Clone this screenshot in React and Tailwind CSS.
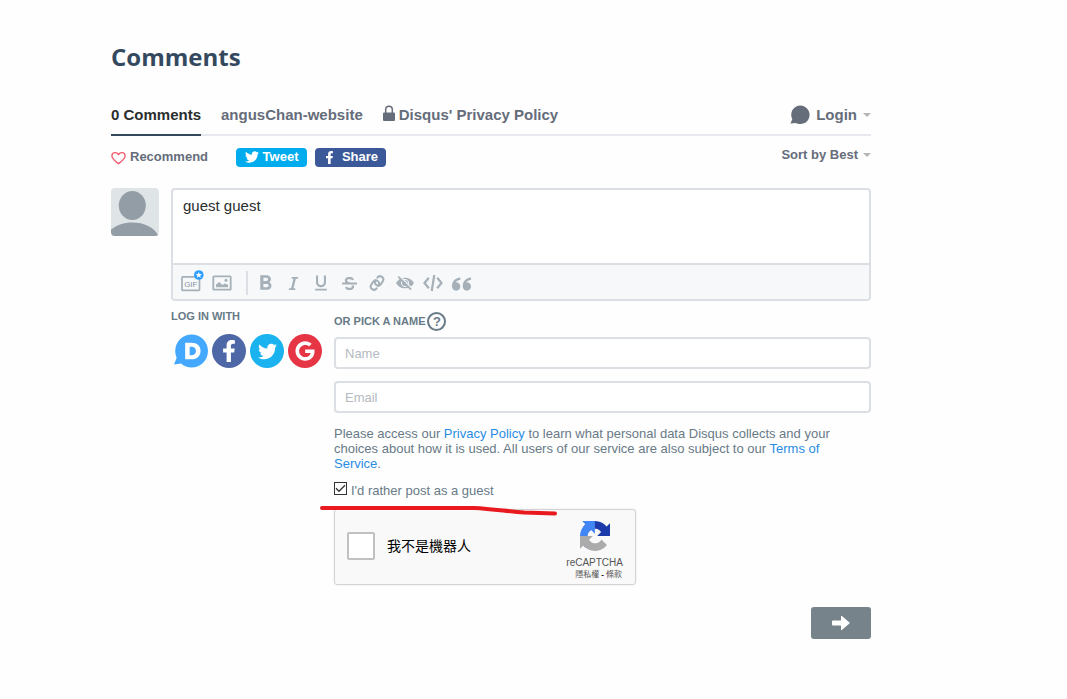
import React from "react";
import { FaTwitter, FaFacebookF, FaGoogle, FaItalic, FaStrikethrough } from "react-icons/fa";
import { SiDisqus } from "react-icons/si";
import { ImQuotesLeft } from "react-icons/im";
import { MdFormatBold, MdFormatUnderlined } from "react-icons/md";

function Caret() {
  return (
    <svg className="h-1 w-2" viewBox="0 0 8 4" fill="#b3b6b9" aria-hidden="true">
      <path d="M0 0h8L4 4z" />
    </svg>
  );
}

function Lock() {
  return (
    <svg className="mb-1 h-4 w-3" viewBox="0 0 12 16" aria-hidden="true">
      <rect y="7.500" width="12" height="8.500" rx="1" fill="#656c7a" />
      <path d="M2.700 8V4.500a3.300 3.300 0 0 1 6.600 0V8" fill="none" stroke="#656c7a" strokeWidth="1.500" />
    </svg>
  );
}

function Bubble() {
  return (
    <svg className="h-5 w-5" viewBox="0 0 20 20" fill="#656c7a" aria-hidden="true">
      <path d="M10.300.5a9.300 9.300 0 1 1-4.600 17.400L.4 18.600l1.900-4.400A9.300 9.300 0 0 1 10.300.5z" />
    </svg>
  );
}

function Heart() {
  return (
    <svg className="h-[15px] w-[15px]" viewBox="0 0 16 16" fill="none" stroke="#f05f70" strokeWidth="1.500" aria-hidden="true">
      <path d="M8 14.500C5 12.200 1 9.700 1 6.100 1 2.600 5.800 1.400 8 4.800 10.200 1.400 15 2.600 15 6.100 15 9.700 11 12.200 8 14.500z" />
    </svg>
  );
}

function Avatar() {
  return (
    <svg className="size-12 shrink-0 rounded-sm" viewBox="0 0 48 48" role="img" aria-label="Avatar">
      <rect width="48" height="48" fill="#dfe4e7" />
      <ellipse cx="21.300" cy="17.500" rx="13.500" ry="14.500" fill="#929da5" />
      <path d="M0 48v-6.500C6 37 13 34.500 21 34.500c12 0 22 4.500 26.500 13.500z" fill="#929da5" />
    </svg>
  );
}

function GifIcon() {
  return (
    <svg className="h-6 w-6" viewBox="0 0 24 24" aria-hidden="true">
      <rect x="2" y="6.800" width="17.500" height="13.500" rx="0.800" fill="none" stroke="#a5b0b8" strokeWidth="1.700" />
      <text x="10.800" y="16.700" textAnchor="middle" fontSize="8" fontFamily="Liberation Sans, sans-serif" fill="#87949e">GIF</text>
      <circle cx="18.800" cy="5" r="4.800" fill="#2e9fff" />
      <path d="M18.800 1.900l.9 2 2.200.2-1.700 1.500.5 2.100-1.900-1.100-1.900 1.100.5-2.100-1.700-1.500 2.200-.2z" fill="#fff" />
    </svg>
  );
}

function ImageIcon() {
  return (
    <svg className="h-4 w-5" viewBox="0 0 20 16" aria-hidden="true">
      <rect x="1.300" y="1.300" width="17.400" height="13.400" rx="0.800" fill="none" stroke="#a5b0b8" strokeWidth="1.800" />
      <path d="M4 12.300V9.800L7.200 7l3.300 3 2.300-1.600L16 9.800v2.500z" fill="#a5b0b8" />
      <circle cx="14" cy="5.300" r="1.500" fill="#a5b0b8" />
    </svg>
  );
}

function LinkIcon() {
  return (
    <svg className="size-4" viewBox="0 0 16 16" fill="none" stroke="#a5b0b8" strokeWidth="2" strokeLinecap="round" aria-hidden="true">
      <path d="M6.800 5.200C5.500 7 5.800 9 7.300 10c1.500 1 3.400.7 4.500-.8l1.900-2.800c1-1.600.7-3.500-.8-4.600-1.500-1-3.400-.7-4.500.8" />
      <path d="M9.200 10.800C10.500 9 10.200 7 8.700 6c-1.500-1-3.400-.7-4.500.8L2.300 9.600c-1 1.600-.7 3.500.8 4.600 1.500 1 3.400.7 4.500-.8" />
    </svg>
  );
}

function SpoilerIcon() {
  return (
    <svg className="h-4 w-[18px]" viewBox="0 0 18 16" aria-hidden="true">
      <path d="M0 8c2-3.300 5-5.300 9-5.300S16 4.700 18 8c-2 3.300-5 5.300-9 5.300S2 11.300 0 8z" fill="#a5b0b8" />
      <circle cx="9" cy="8" r="3.600" fill="none" stroke="#f6f8f9" strokeWidth="1" />
      <path d="M3.600.7l12.600 13" stroke="#f6f8f9" strokeWidth="1.300" />
      <path d="M2.300 1.600l12.800 13" stroke="#a5b0b8" strokeWidth="1.700" />
    </svg>
  );
}

function CodeIcon() {
  return (
    <svg className="h-[18px] w-5" viewBox="0 0 20 18" fill="none" stroke="#a5b0b8" strokeWidth="2.200" aria-hidden="true">
      <path d="M5.800 3.800L1.500 9l4.300 5.200M14.200 3.800L18.500 9l-4.300 5.200M11.300 1L8.700 17" />
    </svg>
  );
}

function RecaptchaLogo() {
  return (
    <svg className="size-[30px]" viewBox="0 0 64 64" aria-hidden="true">
      <path fill="#1c3aa9" d="M64 31.955l-.033-1.370V4.687l-7.160 7.160C50.948 4.674 42.033.093 32.050.093c-10.400 0-19.622 4.960-25.458 12.640l11.736 11.860a15.550 15.550 0 0 1 4.754-5.334c2.050-1.600 4.952-2.906 8.968-2.906.485 0 .860.057 1.135.163 4.976.393 9.288 3.140 11.828 7.124l-8.307 8.307L64 31.953" />
      <path fill="#4285f4" d="M31.862.094l-1.370.033H4.594l7.160 7.160C4.580 13.147 0 22.060 0 32.046c0 10.400 4.960 19.622 12.640 25.458L24.500 45.768a15.550 15.550 0 0 1-5.334-4.754c-1.600-2.050-2.906-4.952-2.906-8.968 0-.485.057-.860.163-1.135.393-4.976 3.140-9.288 7.124-11.828l8.307 8.307L31.860.095" />
      <path fill="#ababab" d="M.001 32.045l.033 1.370v25.898l7.160-7.160c5.860 7.173 14.774 11.754 24.760 11.754 10.400 0 19.622-4.960 25.458-12.640l-11.736-11.860a15.550 15.550 0 0 1-4.754 5.334c-2.050 1.600-4.952 2.906-8.968 2.906-.485 0-.860-.057-1.135-.163-4.976-.393-9.288-3.140-11.828-7.124l8.307-8.307c-10.522.040-22.400.066-27.295-.005" />
    </svg>
  );
}

const field =
  "h-8 w-full rounded border-2 border-[#dbdfe4] bg-white px-[9px] text-[13px] text-[#2a2e2e] placeholder:text-[#b3bac1] outline-none";
const tool = "flex w-7 justify-center";
const social = "flex size-[34px] items-center justify-center rounded-full";

export default function App() {
  return (
    <main className="min-h-screen bg-[#fefefe] pt-10 pr-4 pb-[60px] pl-[111px] font-['Liberation_Sans',Arial,sans-serif] text-[13px] text-[#656c7a]">
      <div className="max-w-[760px]">
        <h1 className="font-['Open_Sans','Noto_Sans',sans-serif] text-2xl leading-[34px] font-bold text-[#34495e]">Comments</h1>

        <nav className="mt-5 flex h-[42px] items-stretch border-b-2 border-[#e7e9ee] text-[15px] font-bold">
          <a href="#comments" className="-mb-[2px] flex items-center border-b-2 border-[#34495e] pt-[2px] text-[#2a2e2e]">0 Comments</a>
          <a href="#site" className="ml-5 flex items-center pt-[2px]">angusChan-website</a>
          <a href="#privacy" className="ml-5 flex items-center gap-1 pt-[2px]">
            <Lock />
            Disqus' Privacy Policy
          </a>
          <button type="button" className="ml-auto flex items-center gap-[6px] pt-[2px]">
            <Bubble />
            Login
            <Caret />
          </button>
        </nav>

        <div className="mt-[11px] flex h-5 items-center font-bold">
          <button type="button" className="flex items-center gap-1">
            <Heart />
            Recommend
          </button>
          <button type="button" className="ml-7 flex h-[19px] w-[71px] items-center justify-center gap-1 rounded bg-[#00aced] text-white">
            <FaTwitter className="size-[14px]" />
            Tweet
          </button>
          <button type="button" className="ml-2 flex h-[19px] w-[71px] items-center justify-center gap-[6px] rounded bg-[#3b5998] text-white">
            <FaFacebookF className="size-[13px]" />
            Share
          </button>
          <button type="button" className="mb-1 ml-auto flex items-center gap-[5px]">
            Sort by Best
            <Caret />
          </button>
        </div>

        <form className="mt-[21px] flex gap-3" onSubmit={(e) => e.preventDefault()}>
          <Avatar />
          <div className="min-w-0 flex-1">
            <div className="overflow-hidden rounded border-2 border-[#dbdfe4] bg-white">
              <textarea
                aria-label="Comment"
                defaultValue="guest guest"
                className="block h-[73px] w-full resize-none px-[10px] py-[6px] text-[15px] leading-5 text-[#2a2e2e] outline-none"
              />
              <div className="flex h-9 items-center border-t-2 border-[#dbdfe4] bg-[#f6f8f9] pt-[2px] pl-[7px] text-[#a5b0b8]">
                <button type="button" aria-label="GIF" className="mb-[3px]"><GifIcon /></button>
                <button type="button" aria-label="Image" className="ml-2"><ImageIcon /></button>
                <div className="ml-[14px] h-6 w-[2px] bg-[#dbdfe4]" />
                <div className="ml-[3px] flex items-center">
                  <button type="button" aria-label="Bold" className={tool}><MdFormatBold className="size-[25px]" /></button>
                  <button type="button" aria-label="Italic" className={tool}><FaItalic className="size-[15px]" /></button>
                  <button type="button" aria-label="Underline" className={tool}><MdFormatUnderlined className="size-5" /></button>
                  <button type="button" aria-label="Strikethrough" className={tool}><FaStrikethrough className="size-[15px]" /></button>
                  <button type="button" aria-label="Link" className={tool}><LinkIcon /></button>
                  <button type="button" aria-label="Spoiler" className={tool}><SpoilerIcon /></button>
                  <button type="button" aria-label="Code" className={tool}><CodeIcon /></button>
                  <button type="button" aria-label="Quote" className={tool}><ImQuotesLeft className="size-[19px]" /></button>
                </div>
              </div>
            </div>

            <div className="mt-2 flex">
              <section className="w-[163px] shrink-0">
                <h2 className="text-[11px] leading-[14px] font-bold text-[#687a86]">LOG IN WITH</h2>
                <div className="mt-[11px] flex gap-1 pl-[3px] text-white">
                  <button type="button" aria-label="Disqus" className="text-[#44a8ff]"><SiDisqus className="size-[34px]" /></button>
                  <button type="button" aria-label="Facebook" className={social + " bg-[#4e67a6]"}><FaFacebookF className="size-[22px]" /></button>
                  <button type="button" aria-label="Twitter" className={social + " bg-[#1ab2ef]"}><FaTwitter className="size-[19px]" /></button>
                  <button type="button" aria-label="Google" className={social + " bg-[#e63545]"}><FaGoogle className="size-5" /></button>
                </div>
              </section>

              <section className="min-w-0 flex-1 text-[#687a86]">
                <div className="flex h-6 items-center gap-[2px] text-[11px] font-bold">
                  OR PICK A NAME
                  <button type="button" aria-label="Help" className="flex size-[19px] items-center justify-center rounded-full border-2 border-[#687a86] text-[13px] leading-none">?</button>
                </div>
                <input aria-label="Name" placeholder="Name" className={field + " mt-1"} />
                <input aria-label="Email" type="email" placeholder="Email" className={field + " mt-3"} />
                <p className="mt-[13px] max-w-[520px] leading-[15px]">
                  Please access our <a href="#policy" className="text-[#288ce4]">Privacy Policy</a> to learn what personal data Disqus collects and your choices about how it is used. All users of our service are also subject to our <a href="#terms" className="text-[#288ce4]">Terms of Service</a>.
                </p>
                <label className="mt-3 flex h-[15px] items-center gap-1">
                  <span className="mb-1 grid size-[13px]">
                    <input type="checkbox" defaultChecked className="peer col-start-1 row-start-1 size-[13px] appearance-none border border-[#333] bg-white" />
                    <svg className="pointer-events-none invisible col-start-1 row-start-1 size-[13px] peer-checked:visible" viewBox="0 0 13 13" fill="none" stroke="#333" strokeWidth="1.300" aria-hidden="true">
                      <path d="M2 6.300l3 3 6-6" />
                    </svg>
                  </span>
                  I'd rather post as a guest
                </label>

                <div className="relative mt-[11px] flex h-[76px] w-[302px] rounded-[3px] border border-[#d3d3d3] bg-[#f9f9f9] px-3 shadow-[0_0_3px_rgba(0,0,0,0.08)]">
                  <label className="flex items-center gap-3 pb-[2px] font-['Liberation_Sans','Noto_Sans_CJK_TC',sans-serif] text-[14px] text-black">
                    <input type="checkbox" className="size-7 appearance-none rounded-[2px] border-2 border-[#c1c1c1] bg-white" />
                    我不是機器人
                  </label>
                  <div className="ml-auto flex flex-col items-center pt-[11px] text-[#555]">
                    <RecaptchaLogo />
                    <span className="mt-[6px] text-[10px] leading-3">reCAPTCHA</span>
                    <span className="flex gap-[2px] pl-2 font-['Liberation_Sans','Noto_Sans_CJK_TC',sans-serif] text-[8px] leading-3">
                      <a href="#captcha-privacy">隱私權</a>
                      <span className="font-bold text-black">-</span>
                      <a href="#captcha-terms">條款</a>
                    </span>
                  </div>
                  <svg className="pointer-events-none absolute -top-[6px] -left-4 h-3 w-60" viewBox="0 0 240 12" fill="none" stroke="#e81a1f" strokeWidth="4" strokeLinecap="round" strokeLinejoin="round" aria-hidden="true">
                    <path d="M3 4H155C175 5 189 7.500 205 8.500L236 9.500" />
                  </svg>
                </div>
              </section>
            </div>

            <div className="mt-[22px] flex justify-end">
              <button type="submit" aria-label="Post comment" className="flex h-8 w-[60px] items-center justify-center rounded-[3px] bg-[#76838b]">
                <svg className="h-4 w-[18px]" viewBox="0 0 18 16" fill="#fff" aria-hidden="true">
                  <path d="M1 5.500h8V1.600Q9 .2 10.200 1.200L18 8l-7.800 6.800Q9 15.800 9 14.400v-3.900H1Q0 10.500 0 9.500v-3Q0 5.500 1 5.500z" />
                </svg>
              </button>
            </div>
          </div>
        </form>
      </div>
    </main>
  );
}
